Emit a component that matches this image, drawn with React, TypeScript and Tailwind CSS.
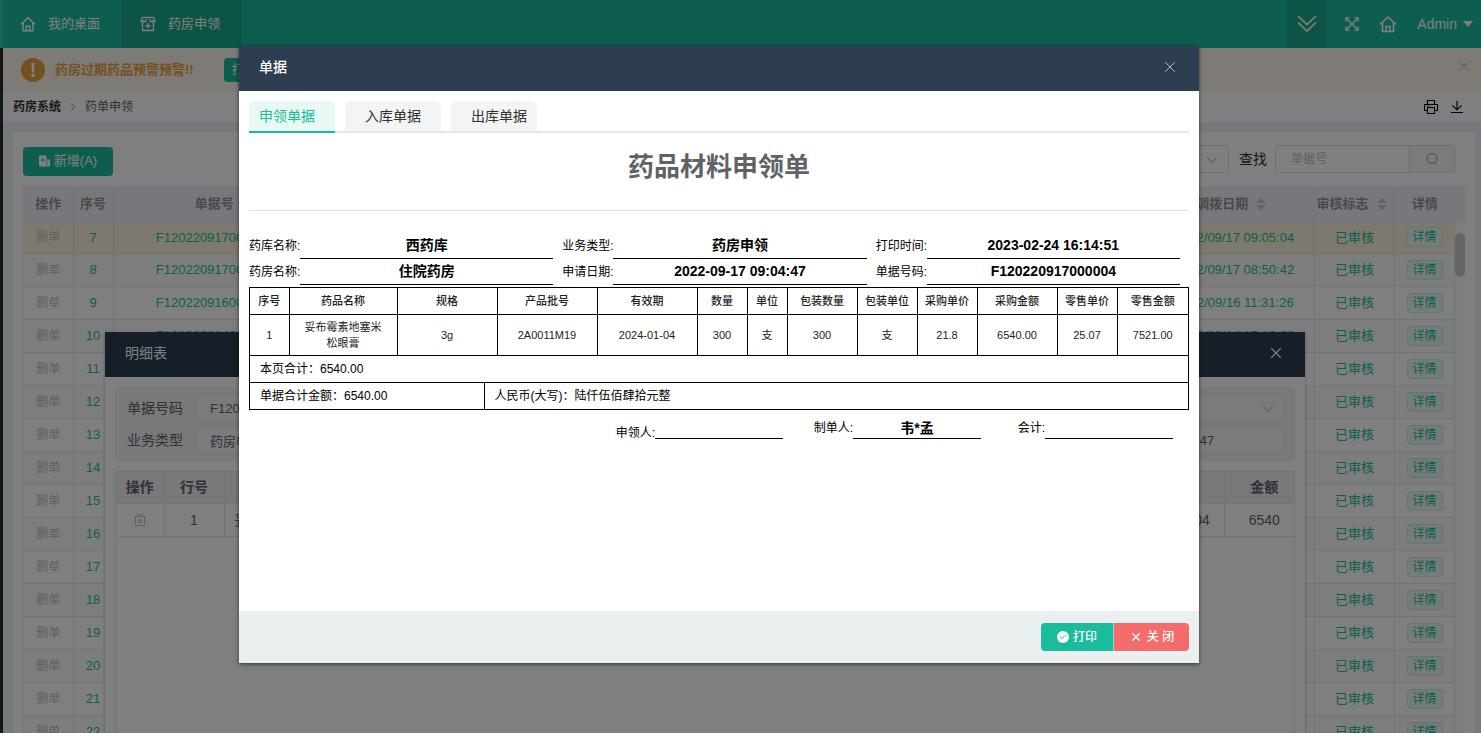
import { useState } from 'react'
import { Check, ChevronDown, ChevronRight, X } from 'lucide-react'

const rows = [
  { id: 7, code: 'F120220917000004', date: '2022/09/17 09:05:04' },
  { id: 8, code: 'F120220917000002', date: '2022/09/17 08:50:42' },
  { id: 9, code: 'F120220916000002', date: '2022/09/16 11:31:26' },
  { id: 10, code: 'F120220914000003', date: '2022/09/14 15:10:02' },
  ...Array.from({ length: 12 }, (_, i) => ({ id: 11 + i, code: '', date: '' })),
]

const fields = [
  ['药库名称:', '西药库'],
  ['业务类型:', '药房申领'],
  ['打印时间:', '2023-02-24 16:14:51'],
  ['药房名称:', '住院药房'],
  ['申请日期:', '2022-09-17 09:04:47'],
  ['单据号码:', 'F120220917000004'],
]

const columns = [
  { title: '序号', value: '1', width: 'w-[39px]' },
  { title: '药品名称', value: '妥布霉素地塞米松眼膏', width: '' },
  { title: '规格', value: '3g', width: 'w-[100px]' },
  { title: '产品批号', value: '2A0011M19', width: 'w-[100px]' },
  { title: '有效期', value: '2024-01-04', width: 'w-[100px]' },
  { title: '数量', value: '300', width: 'w-[50px]' },
  { title: '单位', value: '支', width: 'w-10' },
  { title: '包装数量', value: '300', width: 'w-[70px]' },
  { title: '包装单位', value: '支', width: 'w-[60px]' },
  { title: '采购单价', value: '21.8', width: 'w-[60px]' },
  { title: '采购金额', value: '6540.00', width: 'w-20' },
  { title: '零售单价', value: '25.07', width: 'w-[60px]' },
  { title: '零售金额', value: '7521.00', width: 'w-[71px]' },
]

const tabs = [
  { label: '申领单据', pad: 'pl-2.5 pr-5' },
  { label: '入库单据', pad: 'px-5' },
  { label: '出库单据', pad: 'pl-5 pr-2.5' },
]

function HomeIcon({ className }: { className?: string }) {
  return (
    <svg viewBox="0 0 18 18" className={className} fill="none" stroke="currentColor" strokeWidth="1.6">
      <path d="M1 9.500 9 2l8 7.500" />
      <path d="M3.500 8v8.500h11V8" />
      <path d="M7 16.500v-5h4v5" />
    </svg>
  )
}

function ShopIcon() {
  return (
    <svg viewBox="0 0 16 16" className="size-4" fill="none" stroke="currentColor" strokeWidth="1.3">
      <path d="M2.500 1.500h11l1.200 1.500v2.500h-2v-1.500M1.300 3v2.500h2V4M1.300 3l1.200-1.500M6 3v2.500M10 3v2.500M3.300 5.500H6M10 5.500h2.700" />
      <path d="M2.500 6v8.500h11V6" />
      <path d="M8 7v5.500M5.200 9.800h5.600" />
    </svg>
  )
}

function DoubleDownIcon() {
  return (
    <svg viewBox="0 0 20 18" className="h-[18px] w-5" fill="none" stroke="currentColor" strokeWidth="1.7">
      <path d="m1 1 9 8.500L19 1M1 7.500 10 16l9-8.500" />
    </svg>
  )
}

function FullScreenIcon() {
  return (
    <svg viewBox="0 0 14 14" className="size-3.5" fill="none" stroke="currentColor" strokeWidth="1.4">
      <path d="m1.500 1.500 11 11M12.500 1.500l-11 11" />
      <path d="M.9 4.500V.9h3.600M9.500.9h3.600v3.600M13.100 9.500v3.600H9.500M4.500 13.100H.9V9.500" />
    </svg>
  )
}

function PrinterIcon() {
  return (
    <svg viewBox="0 0 14 14" className="size-3.5" fill="none" stroke="currentColor" strokeWidth="1.1">
      <path d="M3.500 4.500v-4h7v4M3.500 10.500h-3v-6h13v6h-3" />
      <path d="M3.500 7.500h7v6h-7zM2.500 6h1M4.500 6h1" />
    </svg>
  )
}

function DownloadIcon() {
  return (
    <svg viewBox="0 0 14 14" className="size-3.5" fill="none" stroke="currentColor" strokeWidth="1.1">
      <path d="M7 1v8.500M2.500 5.500 7 9.800l4.500-4.300M1 12.500h12" />
    </svg>
  )
}

function AddDocIcon() {
  return (
    <svg viewBox="0 0 11 12" className="h-3 w-[11px]">
      <path fill="currentColor" d="M1 .5h6.500v11H1a1 1 0 0 1-1-1v-9a1 1 0 0 1 1-1zM8.200 4.500H10a1 1 0 0 1 1 1v5a1 1 0 0 1-1 1H8.200z" />
      <path stroke="#1abc9c" strokeWidth="1" d="M3.800 3v4M1.800 5h4" />
    </svg>
  )
}

function TrashIcon() {
  return (
    <svg viewBox="0 0 12 12" className="size-3" fill="none" stroke="currentColor">
      <path d="M.5 2.500h11M3.500 2.500v-2h5v2M1.500 2.500v9h9v-9M4.500 5v4M6 5v4M7.500 5v4" />
    </svg>
  )
}

function SortIcon() {
  return (
    <svg viewBox="0 0 10 12" className="ml-2 mr-1.5 h-3 w-2.5 text-[#c0c4cc]" fill="currentColor">
      <path d="M0 5h10L5 0zM0 7h10l-5 5z" />
    </svg>
  )
}

function Header() {
  return (
    <header className="flex h-12 shrink-0 bg-[#1abc9c] text-white">
      <div className="w-[3px] bg-[#38c4a5]" />
      <a href="#desktop" className="flex w-[119px] items-center gap-3 pl-[17px] text-[13px]">
        <HomeIcon className="size-4" />
        我的桌面
      </a>
      <a href="#apply" className="flex w-[120px] items-center gap-3 bg-[#17a98c] pl-[18px] text-[13px]">
        <ShopIcon />
        药房申领
      </a>
      <div className="ml-auto flex items-center">
        <button type="button" aria-label="展开" className="flex h-12 w-10 items-center justify-center bg-[#17a98c]">
          <DoubleDownIcon />
        </button>
        <button type="button" aria-label="全屏" className="ml-[18px]">
          <FullScreenIcon />
        </button>
        <button type="button" aria-label="首页" className="ml-5">
          <HomeIcon className="size-[18px]" />
        </button>
        <button type="button" className="ml-5 mr-2 flex items-center gap-1.5 text-sm">
          Admin
          <svg viewBox="0 0 10 6" className="h-1.5 w-2.5" fill="currentColor">
            <path d="M0 0h10L5 6z" />
          </svg>
        </button>
      </div>
    </header>
  )
}

function Warning() {
  return (
    <div className="flex h-11 shrink-0 items-center bg-[#fdf6ec] pl-[18px] pr-2.5 text-[13px]">
      <span className="flex size-6 items-center justify-center rounded-full bg-[#e6a23c] text-white">
        <svg viewBox="0 0 4 14" className="h-3.5 w-1" fill="currentColor">
          <path d="M.3 0h3.400L3 9.500H1zM.5 11h3v3h-3z" />
        </svg>
      </span>
      <b className="ml-2.5 text-[#e6a23c]">药房过期药品预警预警!!</b>
      <button type="button" className="ml-[30px] h-6 rounded-sm bg-[#1abc9c] px-2 text-xs text-white">
        打开
      </button>
      <button type="button" aria-label="关闭提示" className="mb-2 ml-auto text-[#c0c4cc]">
        <X size={14} />
      </button>
    </div>
  )
}

function MainTable() {
  return (
    <div className="flex border-l border-[#ebeef5] text-[13px]">
      <table className="flex-1 table-fixed border-collapse text-center">
        <colgroup>
          <col className="w-[49px]" />
          <col className="w-10" />
          <col className="w-[202px]" />
          <col />
          <col className="w-40" />
          <col className="w-20" />
          <col className="w-[60px]" />
        </colgroup>
        <thead className="h-9 bg-[#eef1f6] text-[#909399]">
          <tr>
            <th className="border-r border-[#e3e6ee]">操作</th>
            <th className="border-r border-[#e3e6ee]">序号</th>
            <th>单据号</th>
            <th />
            <th className="border-r border-[#e3e6ee]">
              <span className="flex items-center justify-center">调拨日期<SortIcon /></span>
            </th>
            <th className="border-r border-[#e3e6ee]">
              <span className="flex items-center justify-center">审核标志<SortIcon /></span>
            </th>
            <th>详情</th>
          </tr>
        </thead>
        <tbody className="text-[#1abc9c]">
          {rows.map((row, i) => (
            <tr
              key={row.id}
              className={
                i === 0
                  ? 'h-[31px] bg-[#fcf3dc]'
                  : i % 2
                    ? 'h-[33px] bg-[#fafafa]'
                    : 'h-[33px] bg-white'
              }
            >
              <td className="border-b border-r border-[#e3e6ee] text-xs text-[#c0c4cc]">删单</td>
              <td className="border-b border-r border-[#e3e6ee]">{row.id}</td>
              <td className="border-b border-r border-[#e3e6ee]">{row.code}</td>
              <td className="border-b border-r border-[#e3e6ee]" />
              <td className="whitespace-nowrap border-b border-r border-[#e3e6ee]">{row.date}</td>
              <td className="border-b border-r border-[#e3e6ee]">已审核</td>
              <td className="border-b border-r border-[#e3e6ee]">
                <button type="button" className="mx-auto block h-5 w-9 rounded-sm border border-[#c3ede4] bg-[#e8f8f5] text-xs leading-4">
                  详情
                </button>
              </td>
            </tr>
          ))}
        </tbody>
      </table>
      <div className="w-2.5 bg-[#fafafa]">
        <div className="h-9 bg-[#eef1f6]" />
        <div className="mt-[11px] h-11 rounded-full bg-[#c8c8c8]" />
      </div>
    </div>
  )
}

function DetailDialog() {
  return (
    <section className="absolute left-[105px] top-[332px] flex h-[460px] w-[1200px] flex-col bg-white text-sm text-[#606266] shadow-[0_1px_3px_rgba(0,0,0,0.3)]">
      <header className="flex h-[45px] shrink-0 items-center justify-between bg-[#2c3e50] px-5 pb-1 text-white">
        明细表
        <button type="button" aria-label="关闭明细表">
          <X size={18} strokeWidth={1.5} />
        </button>
      </header>
      <div className="m-2.5 grid grid-cols-4 gap-x-5 gap-y-1 bg-[#f0f2f6] py-[7px] pl-3 pr-2.5">
        <div className="flex items-center">
          <label htmlFor="code" className="w-[68px]">单据号码</label>
          <input id="code" readOnly defaultValue="F120220917000004" className="h-7 min-w-0 flex-1 rounded border border-[#e4e7ed] bg-[#f5f7fa] px-3.5 text-[13px]" />
        </div>
        <div className="col-start-4 flex items-center">
          <label htmlFor="store" className="w-[68px]">药库名称</label>
          <span className="relative flex-1">
            <select id="store" className="h-7 w-full appearance-none rounded border border-[#e4e7ed] bg-[#f5f7fa] px-3.5 text-[13px]">
              <option>西药库</option>
            </select>
            <ChevronDown size={18} strokeWidth={1.5} className="pointer-events-none absolute right-2 top-1.5 text-[#c0c4cc]" />
          </span>
        </div>
        <div className="flex items-center">
          <label htmlFor="type" className="w-[68px]">业务类型</label>
          <input id="type" readOnly defaultValue="药房申领" className="h-7 min-w-0 flex-1 rounded border border-[#e4e7ed] bg-[#f5f7fa] px-3.5 text-[13px]" />
        </div>
        <div className="col-start-4 flex items-center">
          <label htmlFor="date" className="w-[68px]">申请日期</label>
          <input id="date" readOnly defaultValue="2022-09-17 09:04:47" className="h-7 min-w-0 flex-1 rounded border border-[#e4e7ed] bg-[#f5f7fa] px-3.5 text-[13px]" />
        </div>
      </div>
      <div className="mx-2.5 flex-1 border border-[#e3e6ee]">
        <table className="w-full table-fixed border-collapse text-center">
          <colgroup>
            <col className="w-12" />
            <col className="w-[60px]" />
            <col />
            <col className="w-[100px]" />
            <col className="w-[70px]" />
          </colgroup>
          <thead className="h-[31px] bg-[#f0f2f6]">
            <tr>
              <th className="border-b border-r border-[#e3e6ee]">操作</th>
              <th className="border-b border-r border-[#e3e6ee]">行号</th>
              <th className="border-b border-r border-[#e3e6ee]">药品名称</th>
              <th className="border-b border-r border-[#e3e6ee]" />
              <th className="border-b border-[#e3e6ee] pl-2.5">金额</th>
            </tr>
          </thead>
          <tbody className="h-[33px]">
            <tr>
              <td className="border-b border-r border-[#e3e6ee] text-[#c0c4cc]">
                <button type="button" aria-label="删除" className="mx-auto block">
                  <TrashIcon />
                </button>
              </td>
              <td className="border-b border-r border-[#e3e6ee]">1</td>
              <td className="border-b border-r border-[#e3e6ee] px-2.5 text-left">妥布霉素地塞米松眼膏</td>
              <td className="border-b border-r border-[#e3e6ee]">2024-01-04</td>
              <td className="border-b border-[#e3e6ee] pl-2.5">6540</td>
            </tr>
          </tbody>
        </table>
      </div>
    </section>
  )
}

function Receipt() {
  return (
    <div className="text-xs text-black">
      <h1 className="flex h-[78px] items-center justify-center border-b border-[#dcdfe6] pb-2 text-[26px] font-bold text-[#606266]">
        药品材料申领单
      </h1>
      <div className="mt-[22px] grid grid-cols-3">
        {fields.map(([label, value]) => (
          <div key={label} className="flex h-[26px] items-center pr-[9px]">
            <span className="w-[51px] whitespace-nowrap">{label}</span>
            <b className="h-full flex-1 border-b border-black text-center text-sm leading-6">{value}</b>
          </div>
        ))}
      </div>
      <div className="mt-0.5 border border-black">
        <table className="w-full table-fixed border-collapse text-center text-[11px] leading-4 text-[#222222]">
          <colgroup>
            {columns.map((col) => (
              <col key={col.title} className={col.width} />
            ))}
          </colgroup>
          <thead>
            <tr className="h-[26px] border-b border-black">
              {columns.map((col) => (
                <th key={col.title} className="border-l border-black font-medium first:border-l-0">
                  {col.title}
                </th>
              ))}
            </tr>
          </thead>
          <tbody>
            <tr className="h-[41px] border-b border-black">
              {columns.map((col) => (
                <td key={col.title} className={col.width ? 'border-l border-black first:border-l-0' : 'border-l border-black px-3'}>
                  {col.value}
                </td>
              ))}
            </tr>
          </tbody>
        </table>
        <p className="h-[27px] border-b border-black px-2.5 leading-[26px]">本页合计：6540.00</p>
        <div className="flex h-[26px] leading-[26px]">
          <p className="w-1/4 border-r border-black px-2.5">单据合计金额：6540.00</p>
          <p className="px-2.5">人民币(大写)：陆仟伍佰肆拾元整</p>
        </div>
      </div>
      <div className="mt-2 flex justify-end pr-4">
        <div className="flex h-[21px] items-end">
          <span className="w-10 text-right leading-3">申领人:</span>
          <b className="h-full w-32 border-b border-black" />
        </div>
        <div className="ml-[30px] flex h-[21px]">
          <span className="w-10 text-right leading-5">制单人:</span>
          <b className="h-full w-32 border-b border-black text-center text-sm leading-5">韦*孟</b>
        </div>
        <div className="ml-6 flex h-[21px]">
          <span className="w-10 text-right leading-5">会计:</span>
          <b className="h-full w-32 border-b border-black" />
        </div>
      </div>
    </div>
  )
}

function ReceiptDialog() {
  const [active, setActive] = useState(0)

  return (
    <section role="dialog" aria-label="单据" className="absolute left-[239px] top-[46px] w-[960px] bg-white shadow-[0_1px_4px_rgba(0,0,0,0.6)]">
      <header className="flex h-[45px] items-center justify-between bg-[#2c3e50] px-5 pb-1 text-sm font-medium text-white">
        单据
        <button type="button" aria-label="关闭单据" className="text-[#c0c4cc]">
          <X size={18} strokeWidth={1.2} />
        </button>
      </header>
      <div className="h-[520px] p-2.5">
        <div role="tablist" className="flex h-8 gap-2.5 border-b-2 border-[#e4e7ed] text-sm">
          {tabs.map((tab, i) => (
            <button
              key={tab.label}
              type="button"
              role="tab"
              aria-selected={active === i}
              onClick={() => setActive(i)}
              className={`${tab.pad} ${
                active === i
                  ? 'h-8 rounded-t-md border-b-2 border-[#1abc9c] bg-[#e8f8f5] text-[#1abc9c]'
                  : 'h-[30px] rounded-t-md bg-[#f4f4f4] text-[#303133]'
              }`}
            >
              {tab.label}
            </button>
          ))}
        </div>
        <Receipt />
      </div>
      <footer className="flex h-[52px] items-center justify-end bg-[#eaeff0] px-2.5 text-xs font-medium text-white">
        <button type="button" className="flex h-7 w-[73px] items-center justify-center gap-1 rounded-l-sm border-r border-white/50 bg-[#1abc9c]">
          <span className="flex size-3 items-center justify-center rounded-full bg-white text-[#1abc9c]">
            <Check size={8} strokeWidth={3} />
          </span>
          打印
        </button>
        <button type="button" className="flex h-7 w-[75px] items-center justify-center gap-1 rounded-r-sm bg-[#f56c6c]">
          <X size={14} />
          关 闭
        </button>
      </footer>
    </section>
  )
}

export default function App() {
  return (
    <div className="relative flex h-screen flex-col overflow-hidden bg-[#eef1f6] font-['Liberation_Sans','Noto_Sans_CJK_SC',sans-serif]">
      <Header />
      <div className="flex min-h-0 flex-1">
        <aside className="w-[3px] bg-[#1f302e]" />
        <main className="flex min-w-0 flex-1 flex-col">
          <Warning />
          <nav className="flex h-[30px] shrink-0 items-center bg-white px-2.5 text-xs text-[#606266]">
            <a href="#system" className="font-bold text-[#303133]">药房系统</a>
            <ChevronRight size={14} className="mx-[5px] text-[#c0c4cc]" />
            <span>药单申领</span>
            <button type="button" aria-label="打印页面" className="ml-auto text-black">
              <PrinterIcon />
            </button>
            <button type="button" aria-label="下载" className="ml-3 mr-[7px] text-black">
              <DownloadIcon />
            </button>
          </nav>
          <div className="ml-2.5 mr-1.5 mt-2.5 flex-1 overflow-hidden bg-white px-2.5">
            <div className="flex h-[54px] items-center text-[13px]">
              <button type="button" className="mt-1 flex h-[29px] w-[90px] items-center justify-center gap-1 rounded-sm bg-[#1abc9c] text-white">
                <AddDocIcon />
                新增(A)
              </button>
              <span className="relative ml-auto">
                <select aria-label="状态" className="h-7 w-40 appearance-none rounded border border-[#dcdfe6] px-[15px]">
                  <option>全部</option>
                </select>
                <ChevronDown size={18} strokeWidth={1.5} className="pointer-events-none absolute right-2 top-1.5 text-[#c0c4cc]" />
              </span>
              <label htmlFor="search" className="ml-2.5 mr-2 text-sm text-[#303133]">查找</label>
              <input id="search" placeholder="单据号" className="h-7 w-[135px] rounded-l border border-[#dcdfe6] px-[15px] text-xs placeholder:text-[#c0c4cc]" />
              <button type="button" aria-label="搜索" className="mr-2.5 flex h-7 w-[45px] items-center justify-center rounded-r border border-l-0 border-[#dcdfe6] bg-[#f5f7fa] text-[#909399]">
                <svg viewBox="0 0 12 12" className="size-3" fill="none" stroke="currentColor">
                  <circle cx="6" cy="5.500" r="5" />
                  <path d="m8.500 9.500 2 2" />
                </svg>
              </button>
            </div>
            <MainTable />
          </div>
        </main>
      </div>
      <DetailDialog />
      <div className="absolute inset-0 bg-black/50" />
      <ReceiptDialog />
    </div>
  )
}
